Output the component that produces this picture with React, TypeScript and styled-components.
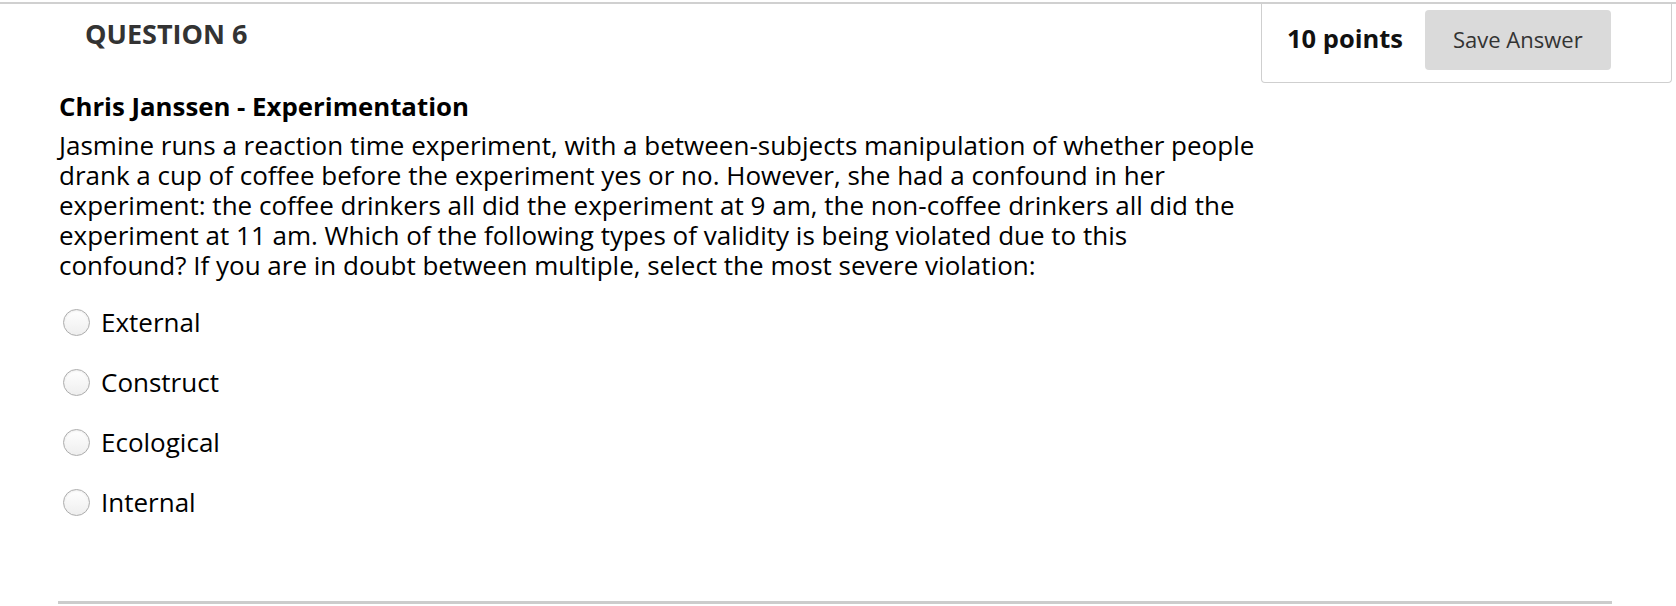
import React from "react";
import styled, { createGlobalStyle } from "styled-components";

const GlobalStyle = createGlobalStyle`
  html, body {
    margin: 0;
    padding: 0;
    background: #ffffff;
  }
  body {
    font-family: "Open Sans", "Noto Sans", "Liberation Sans", sans-serif;
    color: #000;
  }
`;

const TopRule = styled.div`
  margin-top: 2px;
  height: 2px;
  background: #d0d0d0;
`;

const Page = styled.div`
  padding-left: 58px;
`;

const Header = styled.div`
  display: flex;
  justify-content: space-between;
  align-items: flex-start;
`;

const QuestionTitle = styled.h2`
  margin: 13px 0 0 27px;
  font-size: 27px;
  line-height: 34px;
  font-weight: 700;
  color: #333;
`;

const PointsBox = styled.div`
  display: flex;
  align-items: center;
  gap: 22px;
  width: 411px;
  box-sizing: border-box;
  padding: 6px 59px 12px 25px;
  border: 1px solid #cfcfcf;
  border-top: none;
  border-radius: 0 0 4px 4px;
  margin-right: 4px;
`;

const Points = styled.span`
  margin-bottom: 4px;
  font-size: 25.5px;
  font-weight: 700;
  color: #111;
  white-space: nowrap;
`;

const SaveButton = styled.button`
  height: 60px;
  padding: 0 28px 2px;
  border: none;
  border-radius: 4px;
  background: #dadada;
  color: #333;
  font-family: inherit;
  font-size: 22px;
  white-space: nowrap;
  cursor: pointer;
`;

const Content = styled.div`
  padding-left: 1px;
  margin-top: 8px;
`;

const Topic = styled.div`
  font-size: 25.8px;
  line-height: 30px;
  font-weight: 700;
`;

const Body = styled.p`
  margin: 9px 0 0 0;
  max-width: 1199px;
  font-size: 26px;
  line-height: 30px;
`;

const Options = styled.div`
  display: flex;
  flex-direction: column;
  gap: 30px;
  margin-top: 27px;
`;

const Option = styled.label`
  display: flex;
  align-items: center;
  gap: 11px;
  height: 30px;
  font-size: 26px;
  cursor: pointer;
`;

const Radio = styled.span`
  width: 25px;
  height: 25px;
  margin-left: 4px;
  border-radius: 50%;
  border: 1px solid #adadad;
  background: linear-gradient(#ffffff, #eeeeee);
  box-shadow: inset 0 1px 2px rgba(0, 0, 0, 0.08);
  flex: none;
`;

const BottomRule = styled.div`
  margin: 84px 64px 0 0;
  height: 3px;
  background: #cccccc;
`;

const options = ["External", "Construct", "Ecological", "Internal"];

export default function App() {
  return (
    <>
      <GlobalStyle />
      <TopRule />
      <Page>
        <Header>
          <QuestionTitle>QUESTION 6</QuestionTitle>
          <PointsBox>
            <Points>10 points</Points>
            <SaveButton>Save Answer</SaveButton>
          </PointsBox>
        </Header>
        <Content>
          <Topic>Chris Janssen - Experimentation</Topic>
          <Body>
            Jasmine runs a reaction time experiment, with a between-subjects
            manipulation of whether people drank a cup of coffee before the
            experiment yes or no. However, she had a confound in her experiment:
            the coffee drinkers all did the experiment at 9 am, the non-coffee
            drinkers all did the experiment at 11 am. Which of the following
            types of validity is being violated due to this confound? If you are
            in doubt between multiple, select the most severe violation:
          </Body>
          <Options>
            {options.map((o) => (
              <Option key={o}>
                <Radio />
                {o}
              </Option>
            ))}
          </Options>
        </Content>
        <BottomRule />
      </Page>
    </>
  );
}
